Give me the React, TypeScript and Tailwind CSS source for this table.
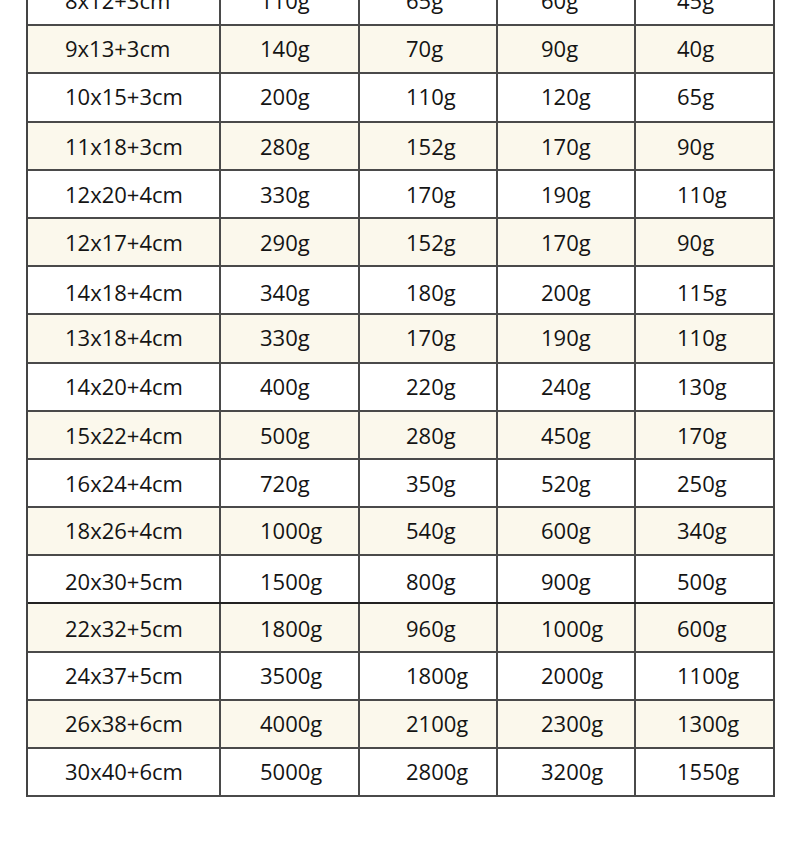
import React from "react";

type Row = { c: string[]; off: string };

const A = "-translate-y-[1px]";
const B = "";
const C = "translate-y-[2px]";

const rows: Row[] = [
  { c: ["8x12+3cm", "110g", "65g", "60g", "45g"], off: A },
  { c: ["9x13+3cm", "140g", "70g", "90g", "40g"], off: A },
  { c: ["10x15+3cm", "200g", "110g", "120g", "65g"], off: A },
  { c: ["11x18+3cm", "280g", "152g", "170g", "90g"], off: B },
  { c: ["12x20+4cm", "330g", "170g", "190g", "110g"], off: B },
  { c: ["12x17+4cm", "290g", "152g", "170g", "90g"], off: B },
  { c: ["14x18+4cm", "340g", "180g", "200g", "115g"], off: C },
  { c: ["13x18+4cm", "330g", "170g", "190g", "110g"], off: A },
  { c: ["14x20+4cm", "400g", "220g", "240g", "130g"], off: A },
  { c: ["15x22+4cm", "500g", "280g", "450g", "170g"], off: B },
  { c: ["16x24+4cm", "720g", "350g", "520g", "250g"], off: B },
  { c: ["18x26+4cm", "1000g", "540g", "600g", "340g"], off: A },
  { c: ["20x30+5cm", "1500g", "800g", "900g", "500g"], off: C },
  { c: ["22x32+5cm", "1800g", "960g", "1000g", "600g"], off: B },
  { c: ["24x37+5cm", "3500g", "1800g", "2000g", "1100g"], off: A },
  { c: ["26x38+6cm", "4000g", "2100g", "2300g", "1300g"], off: A },
  { c: ["30x40+6cm", "5000g", "2800g", "3200g", "1550g"], off: A },
];

export default function App() {
  return (
    <div className="w-[800px] h-[851px] overflow-hidden bg-white text-[#141414] font-['Open_Sans','Noto_Sans',sans-serif]">
      <div className="-mt-[22px] ml-[26px] w-[749px] border-l-2 border-r-2 border-[#444]">
        {rows.map((r, i) => (
          <div
            key={r.c[0]}
            className={
              "flex h-[48.2px] border-b-2 text-[22px] leading-none " +
              (i === 12 ? "border-[#222] " : "border-[#4a4a4a] ") +
              (i % 2 === 1 ? "bg-[#fbf8ec]" : "bg-white")
            }
          >
            <div className="w-[193px] border-r-2 border-[#4a4a4a] flex items-center pl-[37px]">
              <span className={r.off}>{r.c[0]}</span>
            </div>
            <div className="w-[139px] border-r-2 border-[#4a4a4a] flex items-center pl-[39px]">
              <span className={r.off}>{r.c[1]}</span>
            </div>
            <div className="w-[138px] border-r-2 border-[#4a4a4a] flex items-center pl-[46px]">
              <span className={r.off}>{r.c[2]}</span>
            </div>
            <div className="w-[138px] border-r-2 border-[#4a4a4a] flex items-center pl-[43px]">
              <span className={r.off}>{r.c[3]}</span>
            </div>
            <div className="flex-1 flex items-center pl-[41px]">
              <span className={r.off}>{r.c[4]}</span>
            </div>
          </div>
        ))}
      </div>
    </div>
  );
}
